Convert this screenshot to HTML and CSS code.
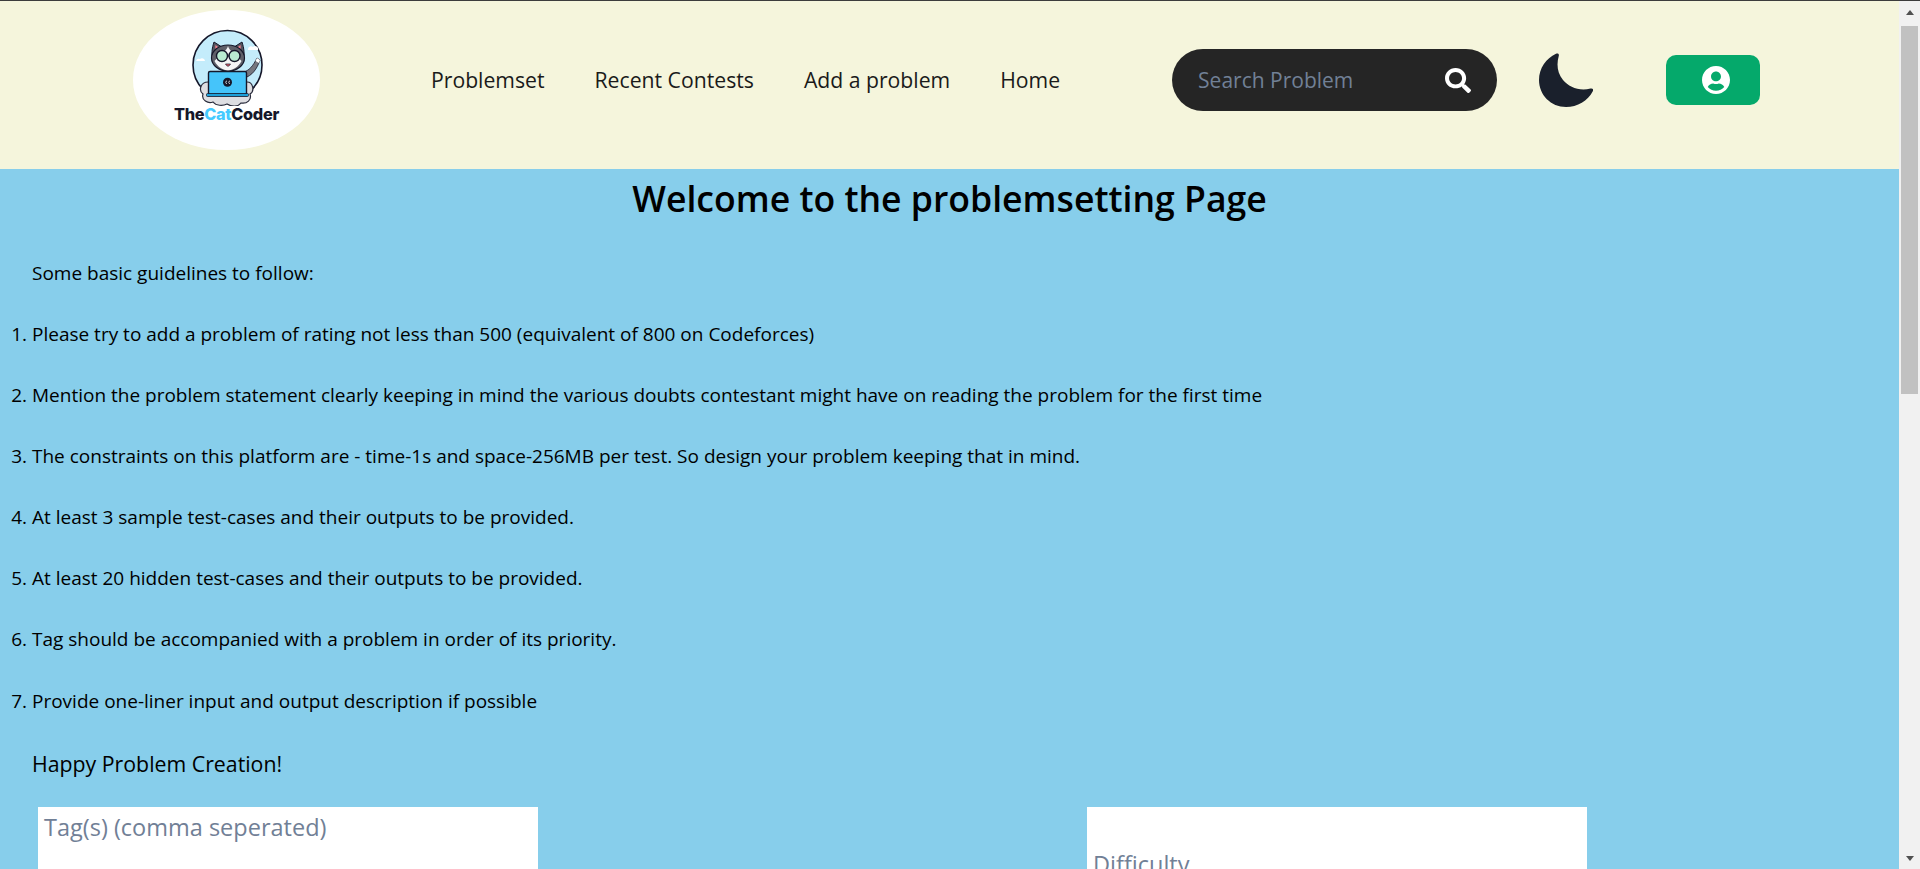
FILE: index.html
```html
<!DOCTYPE html>
<html lang="en">
<head>
    <meta charset="UTF-8">
    <meta name="viewport" content="width=device-width, initial-scale=1.0">
    <title>TheCatCoder - Add a problem</title>
    <link rel="stylesheet" href="styles.css">
</head>
<body>
    <div class="page">
        <header class="navbar">
            <a class="logo" href="#">
                <svg class="logo-art" viewBox="0 0 92 78" width="92" height="78">
                    <circle cx="46.500" cy="37" r="34.500" fill="#c4ecfb" stroke="#15172a" stroke-width="1.600"/>
                    <path d="M67 21a3 3 0 0 1 5-2 3 3 0 0 1 5 3h-10z" fill="#fff"/>
                    <path d="M15 33a3 3 0 0 1 4-2 3 3 0 0 1 5 2h-9z" fill="#fff"/>
                    <path d="M62 44c6-1 10-6 14-14l3 2c-3 9-8 16-16 18z" fill="#77777f" stroke="#15172a" stroke-width=".8"/>
                    <path d="M76 30l3 2-1 3-3.500-2z" fill="#fff"/>
                    <path d="M27 54c-7 0-10 8-5 12-2 6 5 10 10 8 3 4 10 4 14 2 5 3 11 3 14-1 6 1 11-3 9-9 5-3 3-12-3-12z" fill="#dedee2" stroke="#2a2c3c" stroke-width="1.200"/>
                    <path d="M33 14l11 7-3 6-9 6c-2-6-1-13 1-19z" fill="#55555f" stroke="#15172a" stroke-width="1"/>
                    <path d="M61 14l-11 7 3 6 9 6c2-6 1-13-1-19z" fill="#55555f" stroke="#15172a" stroke-width="1"/>
                    <path d="M34.500 17l5 4-4 5c-1-3-1.500-6-1-9z" fill="#f4808f"/>
                    <path d="M59.500 17l-5 4 4 5c1-3 1.500-6 1-9z" fill="#f4808f"/>
                    <ellipse cx="47" cy="30" rx="16.500" ry="13" fill="#5f5f69" stroke="#15172a" stroke-width="1.200"/>
                    <path d="M47 18c-1 5-8 9-13.500 15 3 6 9 9.500 13.500 9.500s10.500-3.500 13.500-9.500c-5.500-6-12.500-10-13.500-15z" fill="#f4f4f6"/>
                    <circle cx="41" cy="28" r="5.500" fill="#b9ecd2" stroke="#15172a" stroke-width="1.400"/>
                    <circle cx="53.500" cy="28" r="5.500" fill="#b9ecd2" stroke="#15172a" stroke-width="1.400"/>
                    <path d="M46 28h2.500" stroke="#15172a" stroke-width="1.200"/>
                    <path d="M44.500 36q2.500 4.500 5 0z" fill="#e8606f" stroke="#15172a" stroke-width=".7"/>
                    <rect x="27.500" y="43.500" width="38" height="23" rx="1.500" fill="#45c4fa" stroke="#15172a" stroke-width="1.400"/>
                    <rect x="25.500" y="65.500" width="42" height="3" rx="1" fill="#1d9fd8" stroke="#15172a" stroke-width=".8"/>
                    <circle cx="46.500" cy="54.300" r="4.500" fill="#15172a"/>
                    <path d="M46 53a1.300 1.300 0 1 0 0 2.600M49 53a1.300 1.300 0 1 0 0 2.600" fill="none" stroke="#fff" stroke-width=".7"/>
                </svg>
                <span class="logo-text">The<span class="logo-cat">Cat</span>Coder</span>
            </a>
            <nav class="nav-links">
                <a href="#">Problemset</a>
                <a href="#">Recent Contests</a>
                <a href="#">Add a problem</a>
                <a href="#">Home</a>
            </nav>
            <form class="search">
                <input type="text" placeholder="Search Problem">
                <svg class="search-icon" viewBox="0 0 512 512" preserveAspectRatio="none">
                    <path fill="#fff" d="M505 442.700L405.300 343c-4.500-4.500-10.600-7-17-7H372c27.600-35.300 44-79.700 44-128C416 93.100 322.900 0 208 0S0 93.100 0 208s93.100 208 208 208c48.300 0 92.700-16.400 128-44v16.300c0 6.400 2.500 12.500 7 17l99.700 99.700c9.400 9.400 24.600 9.400 33.900 0l28.300-28.300c9.400-9.400 9.400-24.600.1-34zM208 336c-70.700 0-128-57.200-128-128 0-70.700 57.200-128 128-128 70.700 0 128 57.200 128 128 0 70.700-57.200 128-128 128z"/>
                </svg>
            </form>
            <svg class="moon" viewBox="0 0 54 54">
                <path fill="#1a202c" d="M17 .8C19-.2 20.300 1 19.800 2.800C17.500 11 18 20 24 27C30 34 40 38.500 51.500 35.600C53.600 35 54.800 36.500 53.800 38.200C48.800 47.800 38.500 54 27 54C12 54 0 42 0 27C0 15.500 7 5.600 17 .8Z"/>
            </svg>
            <button class="user-btn">
                <svg class="user-icon" viewBox="0 8 496 496" preserveAspectRatio="none">
                    <path fill="#fff" d="M248 8C111 8 0 119 0 256s111 248 248 248 248-111 248-248S385 8 248 8zm0 96c48.600 0 88 39.400 88 88s-39.400 88-88 88-88-39.400-88-88 39.400-88 88-88zm0 344c-58.700 0-111.300-26.600-146.500-68.200 18.800-35.400 55.600-59.800 98.500-59.800 2.400 0 4.800.4 7.100 1.100 13 4.200 26.600 6.900 40.900 6.900 14.300 0 28-2.700 40.900-6.900 2.300-.7 4.700-1.100 7.100-1.100 42.900 0 79.700 24.400 98.500 59.800C359.300 421.400 306.700 448 248 448z"/>
                </svg>
            </button>
        </header>

        <main class="content">
            <h1>Welcome to the problemsetting Page</h1>
            <p class="intro">Some basic guidelines to follow:</p>
            <ol class="rules">
                <li>Please try to add a problem of rating not less than 500 (equivalent of 800 on Codeforces)</li>
                <li>Mention the problem statement clearly keeping in mind the various doubts contestant might have on reading the problem for the first time</li>
                <li>The constraints on this platform are - time-1s and space-256MB per test. So design your problem keeping that in mind.</li>
                <li>At least 3 sample test-cases and their outputs to be provided.</li>
                <li>At least 20 hidden test-cases and their outputs to be provided.</li>
                <li>Tag should be accompanied with a problem in order of its priority.</li>
                <li>Provide one-liner input and output description if possible</li>
            </ol>
            <p class="happy">Happy Problem Creation!</p>
            <form class="problem-form">
                <div class="field">Tag(s) (comma seperated)</div>
                <div class="field field-low">Difficulty</div>
            </form>
        </main>
    </div>

    <div class="scrollbar">
        <span class="arrow-up"></span>
        <span class="thumb"></span>
        <span class="arrow-down"></span>
    </div>
</body>
</html>
```

FILE: styles.css
```css
/* General Styling */
html, body {
    height: 100%;
}

body {
    margin: 0;
    display: flex;
    height: 100vh;
    overflow: hidden;
    box-sizing: border-box;
    border-top: 1px solid #3c3c3c;
    font-family: 'Open Sans', 'Noto Sans', sans-serif;
    color: #000000;
    background: #87ceeb;
}

.page {
    flex: 1;
    min-width: 0;
    overflow: hidden;
    background: #87ceeb;
}

/* Navbar */
.navbar {
    display: flex;
    align-items: center;
    height: 168px;
    box-sizing: border-box;
    background: #f5f5dc;
    padding: 0 0 10px 133px;
}

.logo {
    width: 187px;
    height: 140px;
    border-radius: 50%;
    background: #ffffff;
    display: flex;
    flex-direction: column;
    align-items: center;
    padding-top: 18px;
    box-sizing: border-box;
    text-decoration: none;
    flex-shrink: 0;
}

.logo-art {
    display: block;
    flex-shrink: 0;
}

.logo-text {
    font-family: 'Inter', sans-serif;
    font-weight: 800;
    font-size: 16.300px;
    line-height: 17px;
    letter-spacing: -0.3px;
    color: #15172a;
}

.logo-cat {
    color: #45caff;
}

.nav-links {
    display: flex;
    gap: 50px;
    margin-left: 111px;
}

.nav-links a {
    font-size: 21.200px;
    line-height: 28px;
    color: #1a1a1a;
    text-decoration: none;
}

.search {
    display: flex;
    align-items: center;
    justify-content: space-between;
    width: 325px;
    height: 62px;
    margin-left: 112px;
    padding: 0 26px;
    box-sizing: border-box;
    border-radius: 31px;
    background: #252525;
}

.search input {
    width: 220px;
    border: none;
    outline: none;
    background: transparent;
    padding: 0;
    font-family: inherit;
    font-size: 21px;
    color: #ffffff;
}

.search input::placeholder {
    color: #718096;
    opacity: 1;
}

.search-icon {
    width: 26px;
    height: 25px;
}

.moon {
    width: 54px;
    height: 54px;
    margin-left: 42px;
}

.user-btn {
    display: flex;
    align-items: center;
    justify-content: center;
    width: 94px;
    height: 50px;
    margin-left: 73px;
    padding: 0 0 0 6px;
    border: none;
    border-radius: 10px;
    background: #05a96b;
}

.user-icon {
    width: 28px;
    height: 28px;
}

/* Main content */
.content h1 {
    margin: 0;
    padding-top: 5px;
    font-size: 35.600px;
    line-height: 48px;
    font-weight: 600;
    text-align: center;
}

.intro {
    margin: 38px 0 0 32px;
    font-size: 19px;
    line-height: 27px;
}

.rules {
    margin: 34px 0 0;
    padding-left: 32px;
    font-size: 19px;
    line-height: 27px;
}

.rules li {
    margin-bottom: 34.100px;
}

.happy {
    margin: 0 0 0 32px;
    font-size: 21.300px;
    line-height: 30px;
}

.problem-form {
    display: grid;
    grid-template-columns: 500px 500px;
    column-gap: 549px;
    margin: 28px 0 0 38px;
}

.field {
    height: 120px;
    padding: 4px 6px;
    box-sizing: border-box;
    background: #ffffff;
    font-size: 23.500px;
    color: #718096;
}

.field-low {
    padding-top: 41px;
}

/* Scrollbar */
.scrollbar {
    position: relative;
    width: 21px;
    flex-shrink: 0;
    background: #f1f1f1;
    display: flex;
    flex-direction: column;
    align-items: center;
}

.thumb {
    width: 17px;
    height: 368px;
    margin-top: 25px;
    background: #c1c1c1;
}

.arrow-up {
    position: absolute;
    top: 9px;
    border-left: 4.500px solid transparent;
    border-right: 4.500px solid transparent;
    border-bottom: 5px solid #505050;
}

.arrow-down {
    position: absolute;
    bottom: 8px;
    border-left: 4.500px solid transparent;
    border-right: 4.500px solid transparent;
    border-top: 5px solid #505050;
}
```
